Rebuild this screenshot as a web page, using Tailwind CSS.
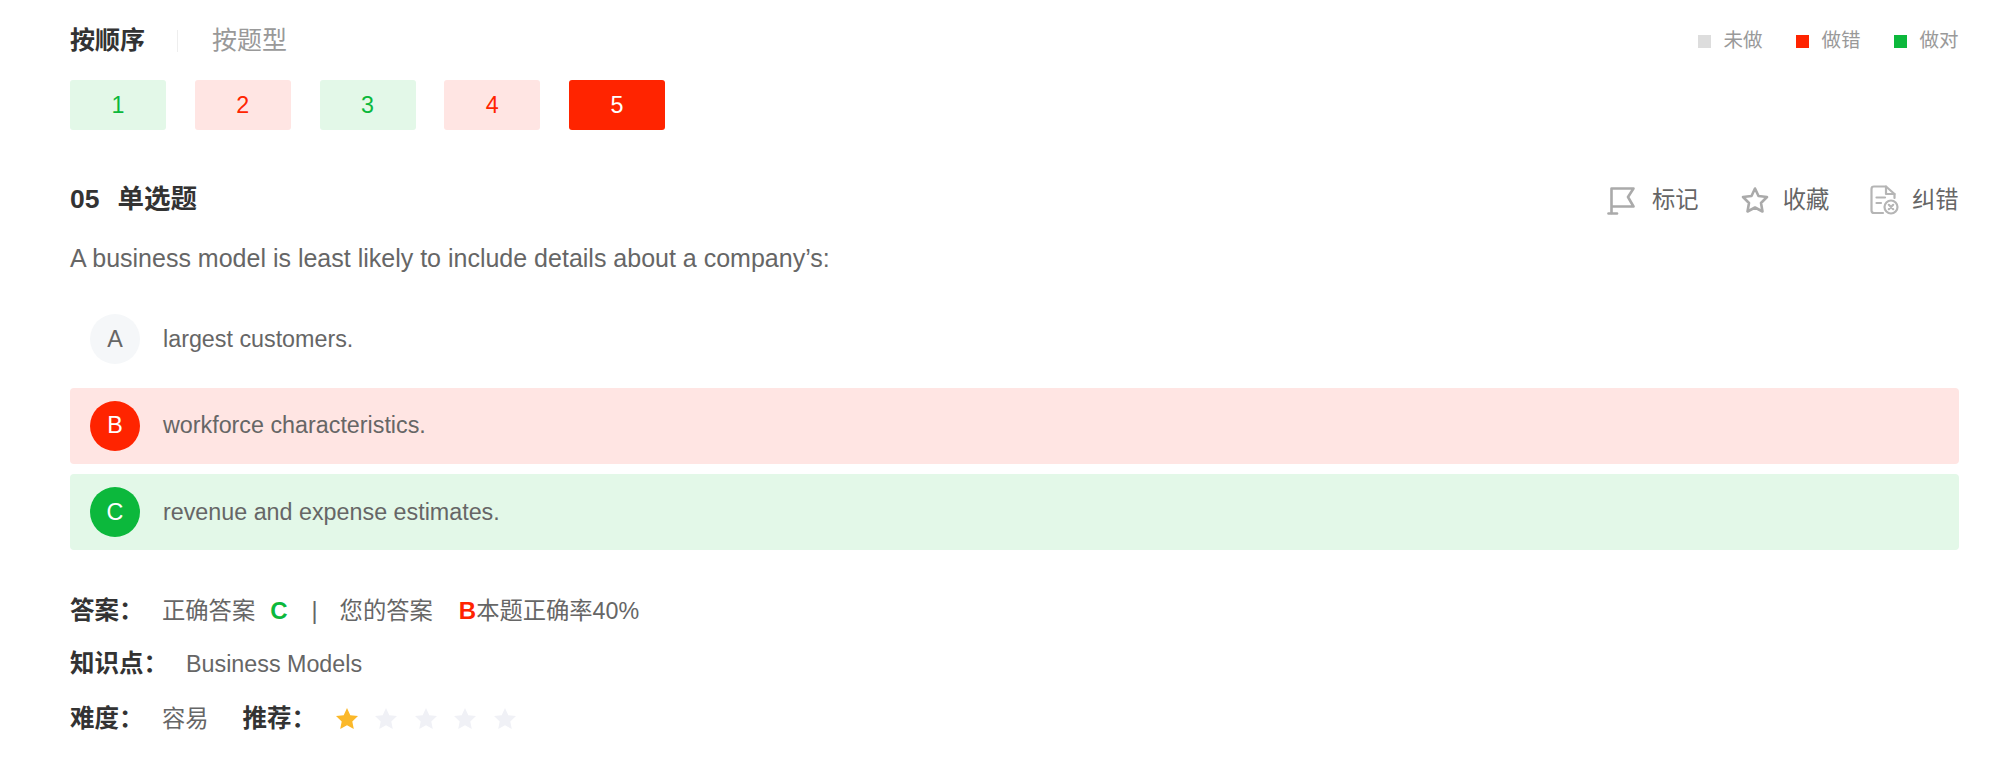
<!DOCTYPE html>
<html lang="zh-CN">
<head>
  <meta charset="UTF-8" />
  <title>单选题</title>
  <script src="https://cdn.jsdelivr.net/npm/@tailwindcss/browser@4"></script>
</head>
<body class="bg-white h-[782px] overflow-hidden font-['Liberation_Sans','Noto_Sans_CJK_SC',sans-serif] text-[#666]">
  <main class="pl-[70px] pr-[41.5px] pt-[23px]">
    <!-- Tabs and legend -->
    <div class="flex items-center justify-between h-[36px]">
      <div class="flex items-center text-[25px]">
        <span class="font-bold text-[#333]">按顺序</span>
        <span class="w-px h-[22px] bg-[#eee] ml-[32px] mr-[34px]"></span>
        <span class="text-[#999]">按题型</span>
      </div>
      <div class="flex items-center gap-[34px] text-[19.5px] text-[#999]">
        <div class="flex items-center gap-[12px]"><i class="w-[13px] h-[13px] bg-[#ddd]"></i>未做</div>
        <div class="flex items-center gap-[12px]"><i class="w-[13px] h-[13px] bg-[#ff2400]"></i>做错</div>
        <div class="flex items-center gap-[12px]"><i class="w-[13px] h-[13px] bg-[#0cb83c]"></i>做对</div>
      </div>
    </div>

    <!-- Question numbers -->
    <div class="flex gap-[28.75px] mt-[21px] text-[23.3px]">
      <button class="w-[96px] h-[50px] rounded-[3px] bg-[#e3f8e8] text-[#0cb83c]">1</button>
      <button class="w-[96px] h-[50px] rounded-[3px] bg-[#ffe5e3] text-[#ff2400]">2</button>
      <button class="w-[96px] h-[50px] rounded-[3px] bg-[#e3f8e8] text-[#0cb83c]">3</button>
      <button class="w-[96px] h-[50px] rounded-[3px] bg-[#ffe5e3] text-[#ff2400]">4</button>
      <button class="w-[96px] h-[50px] rounded-[3px] bg-[#ff2400] text-white">5</button>
    </div>

    <!-- Question head -->
    <div class="flex items-center justify-between mt-[52px] h-[36px]">
      <h1 class="text-[26.5px] font-bold text-[#333] flex gap-[18px]"><span>05</span><span>单选题</span></h1>
      <div class="flex items-center text-[23.3px]">
        <div class="flex items-center gap-[17px]">
          <svg class="w-[28px] h-[30px]" viewBox="0 0 28 30" fill="none" stroke="#aaa" stroke-width="2.6" stroke-linejoin="round" stroke-linecap="round">
            <path d="M4.5 28V3.5H26.5L21 12L26.5 21.5H4.5"/><path d="M1.5 28.5H10"/>
          </svg>
          <span>标记</span>
        </div>
        <div class="flex items-center gap-[14px] ml-[42px]">
          <svg class="w-[28px] h-[28px]" viewBox="0 0 28 28" fill="none" stroke="#aaa" stroke-width="2.6" stroke-linejoin="round">
            <path d="M14 2.5L17.5 10L26 11L20 17L21.5 25.5L14 21.5L6.500 25.5L8 17L2 11L10.500 10Z"/>
          </svg>
          <span>收藏</span>
        </div>
        <div class="flex items-center gap-[13px] ml-[40.7px]">
          <svg class="w-[29px] h-[30px]" viewBox="0 0 29 30" fill="none" stroke="#b5b5b5" stroke-width="2.2" stroke-linecap="round" stroke-linejoin="round">
            <path d="M13 28H4Q1.500 28 1.500 25.500V4Q1.500 1.500 4 1.500H16L24.500 9V13"/><path d="M16 1.500V9H24.500"/>
            <path d="M6.500 12.500H15M6.500 18H11"/>
            <circle cx="21" cy="22" r="6.500"/>
            <path d="M18.800 19.800L23.200 24.200M23.200 19.800L18.800 24.200"/>
          </svg>
          <span>纠错</span>
        </div>
      </div>
    </div>

    <p class="text-[25px] mt-[22px] leading-[36px]">A business model is least likely to include details about a company’s:</p>

    <!-- Options -->
    <div class="mt-[25px] flex flex-col gap-[10.5px] text-[23.3px]">
      <div class="flex items-center h-[76px] px-[20px] rounded-[4px]">
        <span class="w-[50px] h-[50px] rounded-full bg-[#f5f7f9] flex items-center justify-center">A</span>
        <span class="ml-[23px]">largest customers.</span>
      </div>
      <div class="flex items-center h-[76px] px-[20px] rounded-[4px] bg-[#ffe5e3]">
        <span class="w-[50px] h-[50px] rounded-full bg-[#ff2400] text-white flex items-center justify-center">B</span>
        <span class="ml-[23px]">workforce characteristics.</span>
      </div>
      <div class="flex items-center h-[76px] px-[20px] rounded-[4px] bg-[#e3f8e8]">
        <span class="w-[50px] h-[50px] rounded-full bg-[#0cb83c] text-white flex items-center justify-center">C</span>
        <span class="ml-[23px]">revenue and expense estimates.</span>
      </div>
    </div>

    <!-- Answer info -->
    <div class="mt-[43px] text-[23.3px]">
      <div class="flex items-center h-[36px]">
        <b class="text-[#333] text-[24.5px] w-[92px]">答案：</b>
        <span>正确答案</span>
        <b class="text-[#0cb83c] ml-[15px] text-[24px]">C</b>
        <span class="ml-[24px]">|</span>
        <span class="ml-[22px]">您的答案</span>
        <b class="text-[#ff2400] ml-[26px] text-[24px]">B</b>
        <span>本题正确率40%</span>
      </div>
      <div class="flex items-center h-[36px] mt-[17px]">
        <b class="text-[#333] text-[24.5px] w-[116px]">知识点：</b>
        <span>Business Models</span>
      </div>
      <div class="flex items-center h-[36px] mt-[19px]">
        <b class="text-[#333] text-[24.5px] w-[92px]">难度：</b>
        <span>容易</span>
        <b class="text-[#333] text-[24.5px] ml-[34px] w-[92px]">推荐：</b>
        <div class="flex gap-[15.500px]">
          <svg class="w-[24px] h-[24px]" viewBox="0 0 24 24" fill="#fbb829"><path d="M12 1l3.300 7.200 7.700.900-5.700 5.300 1.500 7.700L12 18.300 5.200 22.100l1.500-7.700L1 9.100l7.700-.9z"/></svg>
          <svg class="w-[24px] h-[24px]" viewBox="0 0 24 24" fill="#f0f1f6"><path d="M12 1l3.300 7.200 7.700.900-5.700 5.300 1.500 7.700L12 18.300 5.200 22.100l1.500-7.700L1 9.100l7.700-.9z"/></svg>
          <svg class="w-[24px] h-[24px]" viewBox="0 0 24 24" fill="#f0f1f6"><path d="M12 1l3.300 7.200 7.700.900-5.700 5.300 1.500 7.700L12 18.300 5.200 22.100l1.500-7.700L1 9.100l7.700-.9z"/></svg>
          <svg class="w-[24px] h-[24px]" viewBox="0 0 24 24" fill="#f0f1f6"><path d="M12 1l3.300 7.200 7.700.900-5.700 5.300 1.500 7.700L12 18.300 5.200 22.100l1.500-7.700L1 9.100l7.700-.9z"/></svg>
          <svg class="w-[24px] h-[24px]" viewBox="0 0 24 24" fill="#f0f1f6"><path d="M12 1l3.300 7.200 7.700.900-5.700 5.300 1.500 7.700L12 18.300 5.200 22.100l1.500-7.700L1 9.100l7.700-.9z"/></svg>
        </div>
      </div>
    </div>
  </main>
</body>
</html>
